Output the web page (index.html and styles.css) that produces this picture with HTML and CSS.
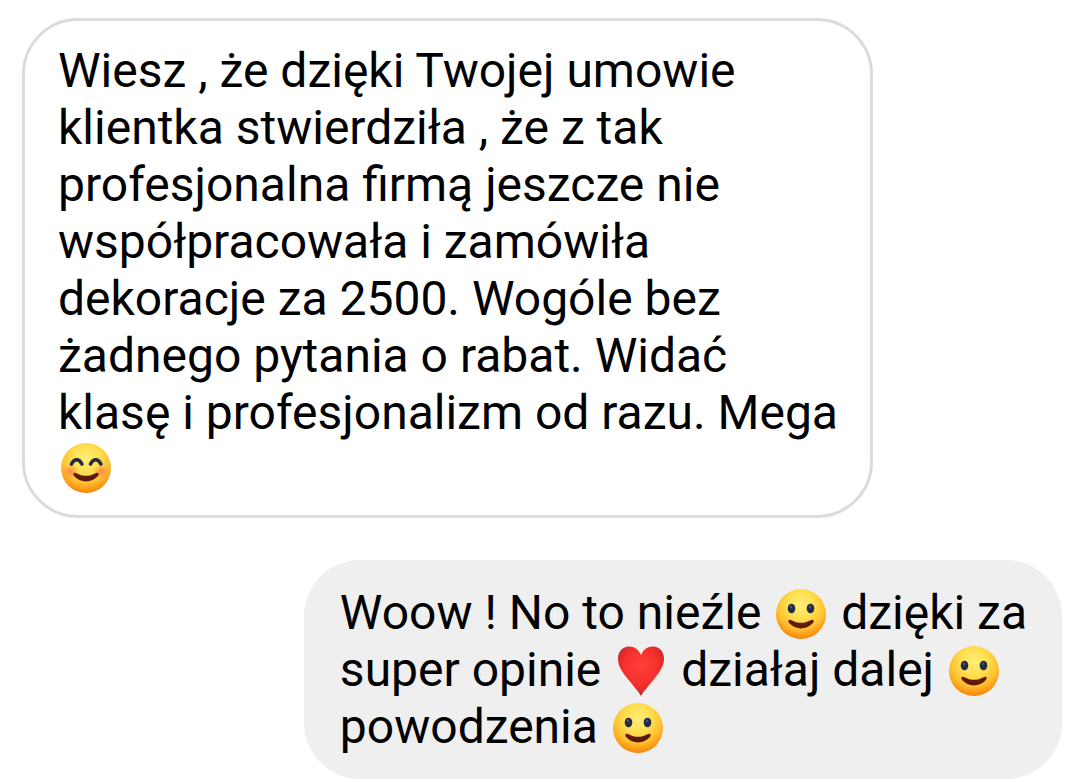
FILE: index.html
```html
<!DOCTYPE html>
<html lang="pl">
<head>
    <meta charset="UTF-8">
    <meta name="viewport" content="width=device-width, initial-scale=1.0">
    <title>Wiesz , że dzięki Twojej umowie</title>
    <link rel="stylesheet" href="styles.css">
</head>
<body>

    <!-- emoji shapes -->
    <svg class="sprite" width="0" height="0" aria-hidden="true">
        <defs>
            <radialGradient id="face-fill" cx="50%" cy="32%" r="68%">
                <stop offset="0" stop-color="#ffee78"/>
                <stop offset="0.4" stop-color="#ffdf50"/>
                <stop offset="0.7" stop-color="#fdc132"/>
                <stop offset="0.88" stop-color="#fb9c16"/>
                <stop offset="1" stop-color="#f5820c"/>
            </radialGradient>
            <radialGradient id="cheek-fill">
                <stop offset="0" stop-color="#ff6f50" stop-opacity="0.75"/>
                <stop offset="1" stop-color="#ff7a50" stop-opacity="0"/>
            </radialGradient>
            <radialGradient id="heart-fill" cx="50%" cy="40%" r="62%">
                <stop offset="0" stop-color="#ff3f3a"/>
                <stop offset="0.6" stop-color="#f5302e"/>
                <stop offset="1" stop-color="#c42428"/>
            </radialGradient>
        </defs>
        <symbol id="smile" viewBox="0 0 50 50">
            <circle cx="25" cy="25" r="25" fill="url(#face-fill)"/>
            <ellipse cx="15.5" cy="19.5" rx="3.8" ry="4.8" fill="#222c45"/>
            <ellipse cx="34.5" cy="19.5" rx="3.8" ry="4.8" fill="#222c45"/>
            <ellipse cx="15" cy="17.7" rx="1.2" ry="1.5" fill="#46546f"/>
            <ellipse cx="34" cy="17.7" rx="1.2" ry="1.5" fill="#46546f"/>
            <path d="M12.600 31.200c.8-.8 1.900-.5 2.800 0 6 3.400 13.200 3.400 19.200 0 .9-.5 2-.8 2.800 0 .6.800.1 2-.5 2.800-5.700 7.200-18.100 7.200-23.800 0-.6-.8-1.100-2-.5-2.800z" fill="#5f1a0c"/>
        </symbol>
        <symbol id="blush" viewBox="0 0 50 50">
            <circle cx="25" cy="25" r="25" fill="url(#face-fill)"/>
            <ellipse cx="9.500" cy="28.500" rx="8.500" ry="7.500" fill="url(#cheek-fill)"/>
            <ellipse cx="40.500" cy="28.500" rx="8.500" ry="7.500" fill="url(#cheek-fill)"/>
            <path d="M10.500 21c2.900-5.600 7.500-5.600 10.400 0M29.500 21c2.900-5.600 7.500-5.600 10.400 0" fill="none" stroke="#222c45" stroke-width="3.600" stroke-linecap="round"/>
            <path d="M12.600 30.200c.8-.8 1.900-.5 2.800 0 6 3.400 13.200 3.400 19.200 0 .9-.5 2-.8 2.800 0 .6.800.1 2-.5 2.800-5.700 7.200-18.100 7.200-23.800 0-.6-.8-1.100-2-.5-2.800z" fill="#5f1a0c"/>
        </symbol>
        <symbol id="heart" viewBox="0 0 50 50">
            <path d="M25 50C22.500 45.500 17 39.500 11 32 5.500 25 2 19.500 2 12.800 2 5.500 6.500 .5 13 .5c5.500 0 10 3.200 12 8.800C27 3.700 31.500.5 37 .5c6.500 0 11 5 11 12.300C48 19.500 44.500 25 39 32 33 39.500 27.500 45.500 25 50z" fill="url(#heart-fill)"/>
        </symbol>
    </svg>

    <main class="chat">
        <p class="message received">
            Wiesz , że dzięki Twojej umowie<br>
            klientka stwierdziła , że z tak<br>
            profesjonalna firmą jeszcze nie<br>
            współpracowała i zamówiła<br>
            dekoracje za 2500. Wogóle bez<br>
            żadnego pytania o rabat. Widać<br>
            klasę i profesjonalizm od razu. Mega<br>
            <svg class="emoji emoji-blush" role="img" aria-label="😊"><use href="#blush"/></svg>
        </p>
        <p class="message sent">
            Woow ! No to nieźle <svg class="emoji" role="img" aria-label="🙂"><use href="#smile"/></svg> dzięki za<br>
            super opinie <svg class="emoji" role="img" aria-label="♥"><use href="#heart"/></svg> działaj dalej <svg class="emoji" role="img" aria-label="🙂"><use href="#smile"/></svg><br>
            powodzenia <svg class="emoji" role="img" aria-label="🙂"><use href="#smile"/></svg>
        </p>
    </main>

</body>
</html>
```
FILE: styles.css
```css
body {
    font-family: Roboto, "Liberation Sans", sans-serif;
    margin: 0;
    background-color: #ffffff;
    color: #000;
}
.sprite {
    display: block;
}
.chat {
    display: flex;
    flex-direction: column;
    gap: 42px;
    padding: 18px 24px 3px 22px;
}
.message {
    margin: 0;
    border-radius: 56px;
    font-size: 48px;
    line-height: 57px;
}
.received {
    align-self: flex-start;
    padding: 21px 32px 17px 33px;
    border: 3px solid #dbdbdb;
}
.sent {
    align-self: flex-end;
    padding: 24px 35px 24px 36px;
    background-color: #efefef;
}
.emoji {
    width: 50px;
    height: 50px;
    margin: 0 3px;
    vertical-align: -10px;
}
.emoji-blush {
    vertical-align: -7px;
}
```
